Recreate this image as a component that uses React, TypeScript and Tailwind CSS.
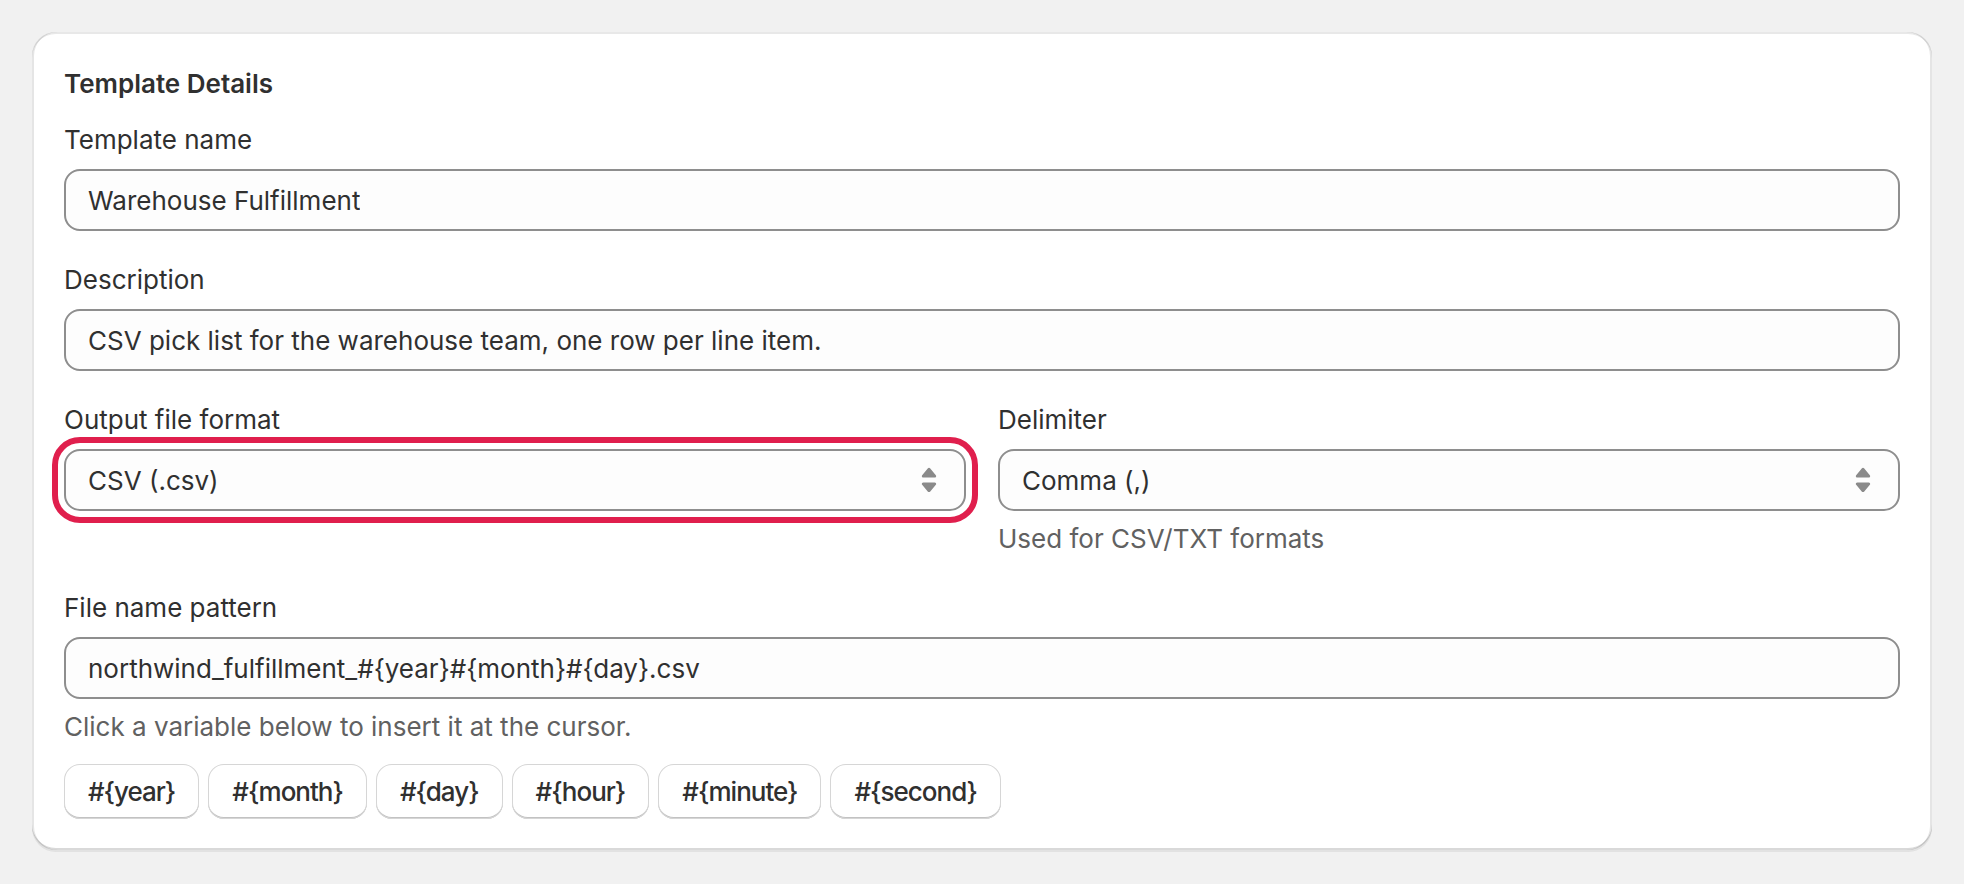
import React from "react";

const variables = ["#{year}", "#{month}", "#{day}", "#{hour}", "#{minute}", "#{second}"];

function SelectArrows() {
  return (
    <svg viewBox="0 0 20 20" className="h-[48px] w-[48px] shrink-0 fill-[#8a8a8a]">
      <path d="M7.676 9h4.648c.563 0 .879-.603.53-1.014l-2.323-2.746a.708.708 0 0 0-1.062 0l-2.324 2.746c-.347.411-.032 1.014.531 1.014Zm4.648 2h-4.648c-.563 0-.878.603-.53 1.014l2.323 2.746c.27.32.792.32 1.062 0l2.323-2.746c.349-.411.033-1.014-.53-1.014Z" />
    </svg>
  );
}

function Label({ children }: { children: React.ReactNode }) {
  return <div className="text-[26px] leading-[40px] text-[#303030]">{children}</div>;
}

function TextBox({ value }: { value: string }) {
  return (
    <div className="mt-[9px] flex h-[62px] items-center rounded-[16px] border-2 border-[#8e8e8e] bg-[#fdfdfd] pl-[22px] pr-[22px] text-[26px] text-[#303030]">
      <span className="truncate">{value}</span>
    </div>
  );
}

function SelectBox({ value, focused }: { value: string; focused?: boolean }) {
  return (
    <div
      className={
        "mt-[9px] flex h-[62px] items-center justify-between rounded-[16px] border-2 border-[#8e8e8e] bg-[#fdfdfd] pl-[22px] pr-[11px] text-[26px] text-[#303030]" +
        (focused ? " outline-[6px] outline-offset-[6px] outline-solid outline-[#e01f4d]" : "")
      }
    >
      <span>{value}</span>
      <SelectArrows />
    </div>
  );
}

function HelpText({ children }: { children: React.ReactNode }) {
  return <div className="mt-[8px] text-[26px] leading-[40px] text-[#616161]">{children}</div>;
}

export default function App() {
  return (
    <div className="min-h-screen bg-[#f1f1f1] p-[32px] font-['Inter','Noto_Sans',sans-serif] antialiased">
      <div className="rounded-[24px] bg-white px-[32px] pt-[32px] pb-[31px] shadow-[inset_2px_0_0_0_rgba(0,0,0,0.1),inset_-2px_0_0_0_rgba(0,0,0,0.1),inset_0_-2px_0_0_rgba(0,0,0,0.15),inset_0_2px_0_0_rgba(204,204,204,0.45),0_2px_0_0_rgba(26,26,26,0.07)]">
        <h2 className="text-[26px] leading-[40px] font-semibold text-[#303030]">Template Details</h2>

        <div className="mt-[16px]">
          <Label>Template name</Label>
          <TextBox value="Warehouse Fulfillment" />
        </div>

        <div className="mt-[29px]">
          <Label>Description</Label>
          <TextBox value="CSV pick list for the warehouse team, one row per line item." />
        </div>

        <div className="mt-[29px] grid grid-cols-2 gap-x-[32px]">
          <div>
            <Label>Output file format</Label>
            <SelectBox value="CSV (.csv)" focused />
          </div>
          <div>
            <Label>Delimiter</Label>
            <SelectBox value="Comma (,)" />
            <HelpText>Used for CSV/TXT formats</HelpText>
          </div>
        </div>

        <div className="mt-[29px]">
          <Label>File name pattern</Label>
          <TextBox value="northwind_fulfillment_#{year}#{month}#{day}.csv" />
          <HelpText>Click a variable below to insert it at the cursor.</HelpText>
        </div>

        <div className="mt-[17px] flex gap-[9px]">
          {variables.map((v) => (
            <button
              key={v}
              type="button"
              className="flex h-[55px] items-center rounded-[16px] bg-white px-[24px] text-[26px] font-medium tracking-[-1px] text-[#303030] shadow-[inset_0_0_0_1px_#d6d6d6,inset_0_-2px_0_0_#c2c2c2]"
            >
              {v}
            </button>
          ))}
        </div>
      </div>
    </div>
  );
}
